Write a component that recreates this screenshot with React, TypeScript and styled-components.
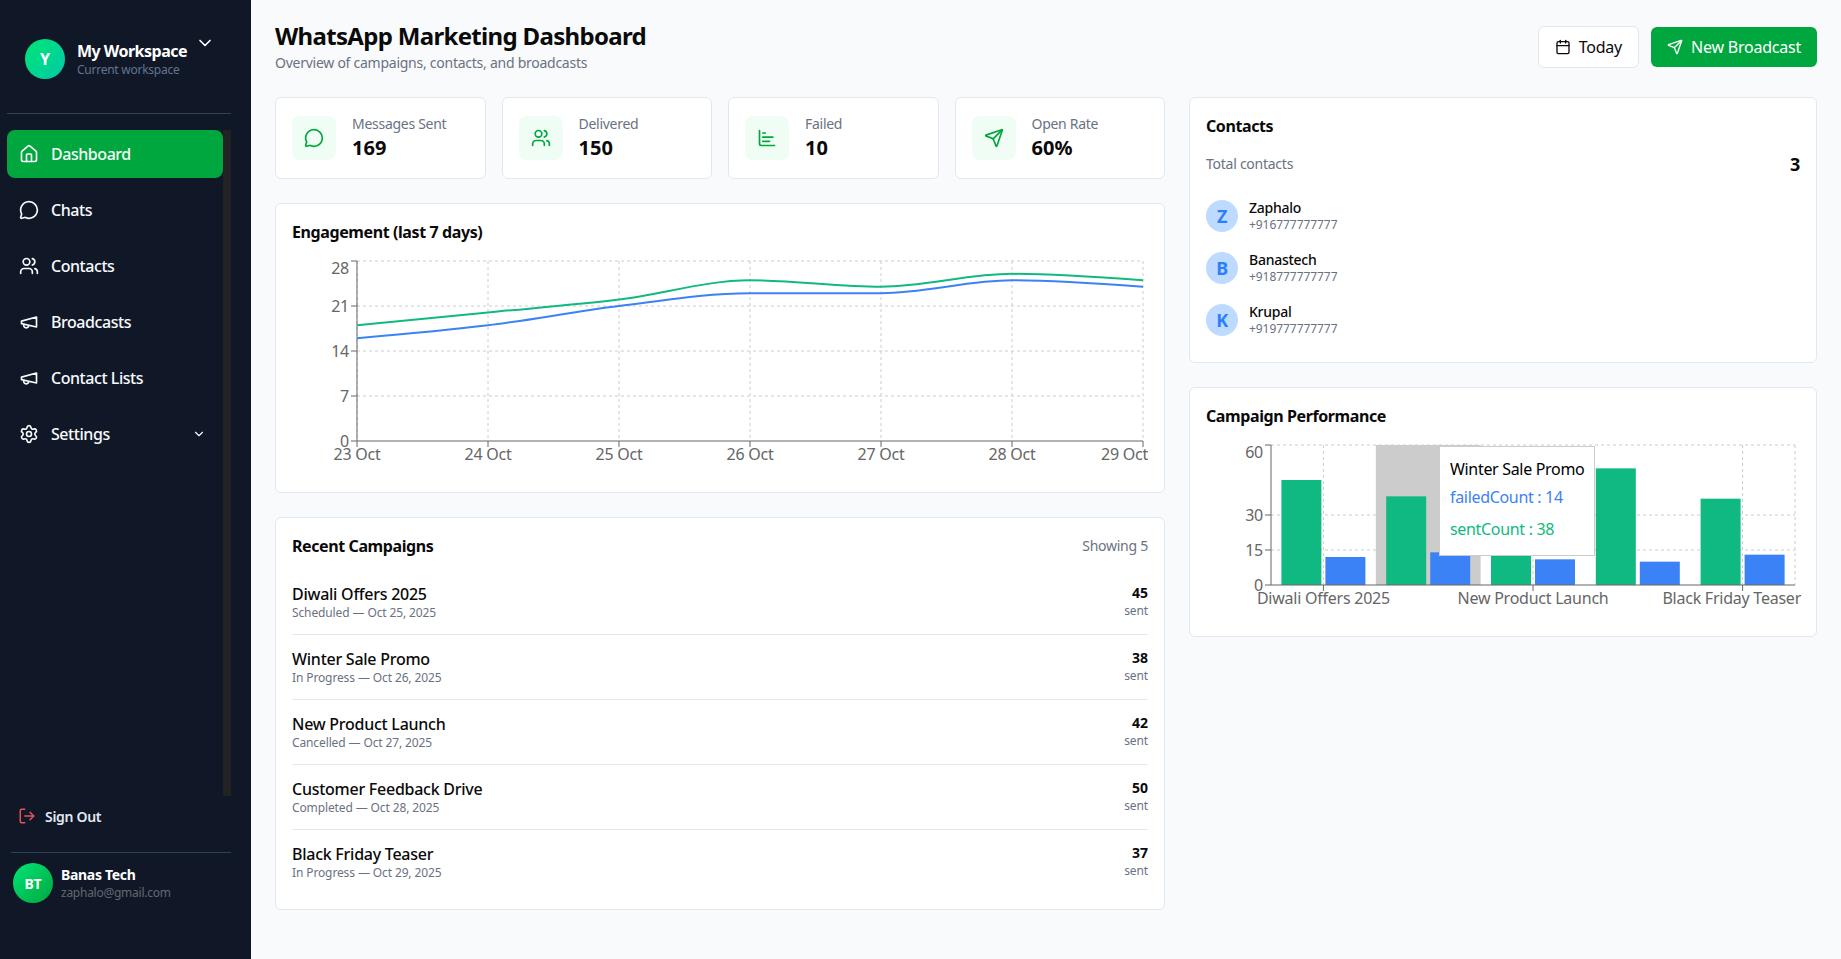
import React from 'react';
import styled, { createGlobalStyle } from 'styled-components';
import {
  House,
  MessageCircle,
  Users,
  Settings,
  ChevronDown,
  LogOut,
  Calendar,
  Send,
  ChartBar,
} from 'lucide-react';

const FONT = '"Noto Sans", "Open Sans", sans-serif';

const GlobalStyle = createGlobalStyle`
  * { box-sizing: border-box; }
  html, body { margin: 0; padding: 0; height: 100%; }
  body { font-family: ${FONT}; letter-spacing: -0.016em; background: #f9fafb; color: #0a0a0a; }
`;

// ---- layout ----

const Shell = styled.div`
  display: flex;
  height: 100vh;
  overflow: hidden;
`;

const Sidebar = styled.aside`
  width: 251px;
  flex-shrink: 0;
  background: #101828;
  color: #fff;
  display: flex;
  flex-direction: column;
  padding: 0 20px 56px 7px;
`;

const Workspace = styled.div`
  display: flex;
  align-items: center;
  box-sizing: content-box;
  height: 40px;
  padding: 39px 0 34px 18px;
  border-bottom: 1px solid #314158;
`;

const WorkspaceAvatar = styled.div`
  width: 40px;
  height: 40px;
  border-radius: 50%;
  background: linear-gradient(135deg, #00e676, #00c9a7);
  display: flex;
  align-items: center;
  justify-content: center;
  font-weight: 700;
  font-size: 16px;
  margin-right: 12px;
`;

const WorkspaceText = styled.div`
  display: flex;
  flex-direction: column;
`;

const WorkspaceName = styled.div`
  font-size: 16px;
  line-height: 20px;
  font-weight: 700;
  letter-spacing: -0.032em;
  white-space: nowrap;
`;

const WorkspaceSub = styled.div`
  font-size: 12px;
  line-height: 16px;
  margin-top: 1px;
  color: #62748e;
`;

const WorkspaceChevron = styled(ChevronDown)`
  align-self: flex-start;
  margin: -6px 0 0 8px;
`;

const Nav = styled.nav`
  flex: 1;
  margin-top: 16px;
  display: flex;
  flex-direction: column;
  gap: 8px;
  overflow: hidden;
  border-right: 8px solid #222;
`;

const NavItem = styled.a<{ $active?: boolean }>`
  display: flex;
  align-items: center;
  flex-shrink: 0;
  gap: 12px;
  height: 48px;
  padding: 0 17px 0 12px;
  border-radius: 8px;
  font-size: 16px;
  font-weight: 500;
  letter-spacing: -0.028em;
  color: #f8fafc;
  background: ${(p) => (p.$active ? '#00a63e' : 'transparent')};
`;

const NavLabel = styled.span`
  flex: 1;
`;

const SignOut = styled.a`
  display: flex;
  align-items: center;
  gap: 9px;
  height: 40px;
  padding-left: 11px;
  font-size: 14px;
  font-weight: 600;
  letter-spacing: -0.022em;
  color: #e2e8f0;
  margin-bottom: 16px;

  svg { color: #e7515a; }
`;

const UserRow = styled.div`
  display: flex;
  align-items: center;
  gap: 8px;
  margin-left: 4px;
  padding: 10px 0 0 2px;
  border-top: 1px solid #314158;
`;

const UserAvatar = styled.div`
  width: 40px;
  height: 40px;
  border-radius: 50%;
  background: linear-gradient(135deg, #00e676, #00a63e);
  display: flex;
  align-items: center;
  justify-content: center;
  font-size: 14px;
  font-weight: 700;
`;

const UserName = styled.div`
  font-size: 14px;
  line-height: 20px;
  font-weight: 700;
  letter-spacing: -0.022em;
`;

const UserMail = styled.div`
  font-size: 12px;
  line-height: 16px;
  color: #62686f;
`;

const Main = styled.main`
  flex: 1;
  min-width: 0;
  padding: 20px 24px;
  overflow: auto;
`;

const Header = styled.header`
  display: flex;
  align-items: center;
  justify-content: space-between;
  margin-bottom: 24px;
`;

const Title = styled.h1`
  margin: 0;
  font-size: 24px;
  line-height: 32px;
  font-weight: 700;
  letter-spacing: -0.028em;
`;

const Subtitle = styled.p`
  margin: 1px 0 0;
  font-size: 14px;
  line-height: 20px;
  color: #6a7282;
`;

const Actions = styled.div`
  display: flex;
  align-items: center;
  gap: 12px;
`;

const Button = styled.button<{ $primary?: boolean }>`
  display: flex;
  align-items: center;
  gap: 8px;
  height: ${(p) => (p.$primary ? '40px' : '42px')};
  padding: 0 16px;
  border-radius: 6px;
  font-family: inherit;
  font-size: 16px;
  letter-spacing: -0.014em;
  color: ${(p) => (p.$primary ? '#fff' : '#0a0a0a')};
  background: ${(p) => (p.$primary ? '#00a63e' : '#fff')};
  border: ${(p) => (p.$primary ? 'none' : '1px solid #e5e7eb')};
`;

const Columns = styled.div`
  display: grid;
  grid-template-columns: 890px 628px;
  gap: 24px;
  align-items: start;
`;

const Column = styled.div`
  display: flex;
  flex-direction: column;
  gap: 24px;
`;

const Stats = styled.div`
  display: grid;
  grid-template-columns: repeat(4, 1fr);
  gap: 16px;
`;

const Card = styled.section`
  background: #fff;
  border: 1px solid #e2e8f0;
  border-radius: 6px;
  padding: 16px;
`;

const StatCard = styled(Card)`
  display: flex;
  align-items: center;
  gap: 16px;
  height: 82px;
`;

const StatIcon = styled.div`
  width: 44px;
  height: 44px;
  border-radius: 8px;
  background: #f0fdf4;
  color: #00a63e;
  display: flex;
  align-items: center;
  justify-content: center;
`;

const StatLabel = styled.div`
  font-size: 14px;
  line-height: 20px;
  letter-spacing: -0.02em;
  color: #6a7282;
`;

const StatValue = styled.div`
  font-size: 20px;
  line-height: 28px;
  font-weight: 700;
  letter-spacing: 0;
`;

const CardTitle = styled.h2`
  margin: 0;
  font-size: 16px;
  line-height: 24px;
  font-weight: 700;
  letter-spacing: -0.025em;
`;

const ChartWrap = styled.div`
  position: relative;
  margin-top: 12px;
`;

const CardHead = styled.div`
  display: flex;
  align-items: center;
  justify-content: space-between;
  margin-bottom: 12px;
`;

const Muted = styled.span`
  font-size: 14px;
  line-height: 20px;
  color: #6a7282;
`;

const CampaignRow = styled.div`
  display: flex;
  justify-content: space-between;
  padding: 13px 0;
  border-bottom: 1px solid #e5e7eb;

  &:last-child { border-bottom: none; padding-bottom: 12px; }
`;

const CampaignName = styled.div`
  font-size: 16px;
  line-height: 22px;
  font-weight: 500;
`;

const CampaignMeta = styled.div`
  font-size: 12px;
  line-height: 16px;
  letter-spacing: -0.01em;
  color: #6a7282;
`;

const CampaignCount = styled.div`
  text-align: right;
`;

const CountValue = styled.div`
  font-size: 14px;
  line-height: 20px;
  font-weight: 700;
  letter-spacing: 0;
`;

const TotalRow = styled.div`
  display: flex;
  align-items: center;
  justify-content: space-between;
  margin-top: 12px;
`;

const TotalValue = styled.span`
  font-size: 18px;
  line-height: 28px;
  font-weight: 700;
`;

const ContactList = styled.div`
  display: flex;
  flex-direction: column;
  gap: 8px;
  margin: 16px 0 4px;
`;

const ContactRow = styled.div`
  display: flex;
  align-items: center;
  gap: 11px;
  height: 44px;
`;

const ContactAvatar = styled.div`
  width: 32px;
  height: 32px;
  border-radius: 50%;
  background: #bedbff;
  color: #2b7fff;
  display: flex;
  align-items: center;
  justify-content: center;
  font-size: 18px;
  font-weight: 700;
`;

const ContactName = styled.div`
  font-size: 14px;
  line-height: 18px;
  font-weight: 500;
`;

const ContactPhone = styled.div`
  font-size: 12px;
  line-height: 16px;
  letter-spacing: -0.005em;
  color: #6a7282;
`;

// ---- chart parts ----

const Svg = styled.svg`
  display: block;
`;

const GridLine = styled.line`
  stroke: #ccc;
  stroke-dasharray: 3 3;
`;

const AxisLine = styled.line`
  stroke: #666;
`;

const AxisText = styled.text`
  fill: #666;
  font-size: 16px;
  font-family: ${FONT};
  letter-spacing: -0.015em;
  dominant-baseline: central;
`;

const Cursor = styled.rect`
  fill: #ccc;
`;

const TooltipBox = styled.div`
  position: absolute;
  left: 233px;
  top: 6px;
  width: 156px;
  padding: 10px;
  background: #fff;
  border: 1px solid #ccc;
  white-space: nowrap;
  letter-spacing: -0.02em;
`;

const TooltipLabel = styled.div`
  font-size: 16px;
  line-height: 24px;
  color: #000;
`;

const TooltipItem = styled.div<{ $color: string }>`
  font-size: 16px;
  line-height: 24px;
  padding: 4px 0;
  color: ${(p) => p.$color};
`;

// the older lucide megaphone, the current package draws a different one
const MegaphoneIcon = ({ size = 20 }: { size?: number }) => (
  <svg
    width={size}
    height={size}
    viewBox="0 0 24 24"
    fill="none"
    stroke="currentColor"
    strokeWidth={2}
    strokeLinecap="round"
    strokeLinejoin="round"
  >
    <path d="m3 11 18-5v12L3 14v-3z" />
    <path d="M11.6 16.8a3 3 0 1 1-5.8-1.6" />
  </svg>
);

// ---- data ----

const GREEN = '#10b981';
const BLUE = '#3b82f6';

const navItems = [
  { label: 'Dashboard', icon: House, active: true },
  { label: 'Chats', icon: MessageCircle },
  { label: 'Contacts', icon: Users },
  { label: 'Broadcasts', icon: MegaphoneIcon },
  { label: 'Contact Lists', icon: MegaphoneIcon },
  { label: 'Settings', icon: Settings, chevron: true },
];

const stats = [
  { label: 'Messages Sent', value: '169', icon: MessageCircle },
  { label: 'Delivered', value: '150', icon: Users },
  { label: 'Failed', value: '10', icon: ChartBar },
  { label: 'Open Rate', value: '60%', icon: Send },
];

const campaigns = [
  { name: 'Diwali Offers 2025', status: 'Scheduled', date: 'Oct 25, 2025', sent: 45, failed: 12 },
  { name: 'Winter Sale Promo', status: 'In Progress', date: 'Oct 26, 2025', sent: 38, failed: 14 },
  { name: 'New Product Launch', status: 'Cancelled', date: 'Oct 27, 2025', sent: 42, failed: 11 },
  { name: 'Customer Feedback Drive', status: 'Completed', date: 'Oct 28, 2025', sent: 50, failed: 10 },
  { name: 'Black Friday Teaser', status: 'In Progress', date: 'Oct 29, 2025', sent: 37, failed: 13 },
];

const contacts = [
  { name: 'Zaphalo', phone: '+916777777777' },
  { name: 'Banastech', phone: '+918777777777' },
  { name: 'Krupal', phone: '+919777777777' },
];

const days = ['23 Oct', '24 Oct', '25 Oct', '26 Oct', '27 Oct', '28 Oct', '29 Oct'];
const sentLine = [18, 20, 22, 25, 24, 26, 25];
const failedLine = [16, 18, 21, 23, 23, 25, 24];

// same curve recharts draws for type="monotone"
const monotonePath = (pts: [number, number][]) => {
  const n = pts.length;
  const slope = pts.map(() => 0);
  for (let i = 1; i < n - 1; i++) {
    const h0 = pts[i][0] - pts[i - 1][0];
    const h1 = pts[i + 1][0] - pts[i][0];
    const s0 = (pts[i][1] - pts[i - 1][1]) / h0;
    const s1 = (pts[i + 1][1] - pts[i][1]) / h1;
    const p = (s0 * h1 + s1 * h0) / (h0 + h1);
    slope[i] = (Math.sign(s0) + Math.sign(s1)) * Math.min(Math.abs(s0), Math.abs(s1), 0.5 * Math.abs(p)) || 0;
  }
  const edge = (a: number, b: number, t: number) =>
    (3 * (pts[b][1] - pts[a][1])) / (pts[b][0] - pts[a][0]) / 2 - t / 2;
  slope[0] = edge(0, 1, slope[1]);
  slope[n - 1] = edge(n - 2, n - 1, slope[n - 2]);
  let d = `M${pts[0][0]},${pts[0][1]}`;
  for (let i = 1; i < n; i++) {
    const dx = (pts[i][0] - pts[i - 1][0]) / 3;
    d += `C${pts[i - 1][0] + dx},${pts[i - 1][1] + dx * slope[i - 1]},${pts[i][0] - dx},${pts[i][1] - dx * slope[i]},${pts[i][0]},${pts[i][1]}`;
  }
  return d;
};

const EngagementChart = () => {
  const left = 65;
  const right = 851;
  const top = 5;
  const bottom = 185;
  const stepX = (right - left) / 6;
  const toY = (v: number) => bottom - (v / 28) * (bottom - top);
  const line = (values: number[]) =>
    monotonePath(values.map((v, i) => [left + i * stepX, toY(v)] as [number, number]));

  return (
    <Svg width={856} height={220}>
      {[28, 21, 14, 7].map((v) => (
        <GridLine key={v} x1={left} x2={right} y1={toY(v)} y2={toY(v)} />
      ))}
      {days.map((_, i) => (
        <GridLine key={i} x1={left + i * stepX} x2={left + i * stepX} y1={top} y2={bottom} />
      ))}
      <AxisLine x1={left} x2={left} y1={top} y2={bottom} />
      <AxisLine x1={left} x2={right} y1={bottom} y2={bottom} />
      {[28, 21, 14, 7, 0].map((v) => (
        <g key={v}>
          <AxisLine x1={left - 6} x2={left} y1={toY(v)} y2={toY(v)} />
          <AxisText x={left - 8} y={v === 28 ? toY(v) + 7 : toY(v)} textAnchor="end">
            {v}
          </AxisText>
        </g>
      ))}
      {days.map((d, i) => (
        <g key={d}>
          <AxisLine x1={left + i * stepX} x2={left + i * stepX} y1={bottom} y2={bottom + 6} />
          <AxisText x={i === 6 ? 856 : left + i * stepX} y={bottom + 13} textAnchor={i === 6 ? 'end' : 'middle'}>
            {d}
          </AxisText>
        </g>
      ))}
      <path d={line(sentLine)} fill="none" stroke={GREEN} strokeWidth={2} />
      <path d={line(failedLine)} fill="none" stroke={BLUE} strokeWidth={2} />
    </Svg>
  );
};

const PerformanceChart = () => {
  const left = 65;
  const right = 589;
  const top = 5;
  const bottom = 145;
  const band = (right - left) / 5;
  const toY = (v: number) => bottom - (v / 60) * (bottom - top);
  const labelled = [0, 2, 4];

  return (
    <Svg width={596} height={180}>
      {[60, 30, 15].map((v) => (
        <GridLine key={v} x1={left} x2={right} y1={toY(v)} y2={toY(v)} />
      ))}
      <GridLine x1={right} x2={right} y1={top} y2={bottom} />
      {labelled.map((i) => (
        <GridLine key={i} x1={left + band * (i + 0.5)} x2={left + band * (i + 0.5)} y1={top} y2={bottom} />
      ))}
      <Cursor x={left + band} y={top} width={band} height={bottom - top} />
      {campaigns.map((c, i) => {
        const x = left + band * i + (band - 84) / 2;
        return (
          <g key={c.name}>
            <rect x={x} y={toY(c.sent)} width={40} height={bottom - toY(c.sent)} fill={GREEN} />
            <rect x={x + 44} y={toY(c.failed)} width={40} height={bottom - toY(c.failed)} fill={BLUE} />
          </g>
        );
      })}
      <AxisLine x1={left} x2={left} y1={top} y2={bottom} />
      <AxisLine x1={left} x2={right} y1={bottom} y2={bottom} />
      {[60, 30, 15, 0].map((v) => (
        <g key={v}>
          <AxisLine x1={left - 6} x2={left} y1={toY(v)} y2={toY(v)} />
          <AxisText x={left - 8} y={v === 60 ? toY(v) + 7 : toY(v)} textAnchor="end">
            {v}
          </AxisText>
        </g>
      ))}
      {labelled.map((i) => (
        <g key={i}>
          <AxisLine x1={left + band * (i + 0.5)} x2={left + band * (i + 0.5)} y1={bottom} y2={bottom + 6} />
          <AxisText
            x={i === 4 ? 595 : left + band * (i + 0.5)}
            y={bottom + 13}
            textAnchor={i === 4 ? 'end' : 'middle'}
          >
            {campaigns[i].name}
          </AxisText>
        </g>
      ))}
    </Svg>
  );
};

export default function App() {
  return (
    <>
      <GlobalStyle />
      <Shell>
        <Sidebar>
          <Workspace>
            <WorkspaceAvatar>Y</WorkspaceAvatar>
            <WorkspaceText>
              <WorkspaceName>My Workspace</WorkspaceName>
              <WorkspaceSub>Current workspace</WorkspaceSub>
            </WorkspaceText>
            <WorkspaceChevron size={20} />
          </Workspace>
          <Nav>
            {navItems.map((item) => (
              <NavItem key={item.label} $active={item.active}>
                <item.icon size={20} />
                <NavLabel>{item.label}</NavLabel>
                {item.chevron && <ChevronDown size={14} />}
              </NavItem>
            ))}
          </Nav>
          <SignOut>
            <LogOut size={18} />
            Sign Out
          </SignOut>
          <UserRow>
            <UserAvatar>BT</UserAvatar>
            <div>
              <UserName>Banas Tech</UserName>
              <UserMail>zaphalo@gmail.com</UserMail>
            </div>
          </UserRow>
        </Sidebar>
        <Main>
          <Header>
            <div>
              <Title>WhatsApp Marketing Dashboard</Title>
              <Subtitle>Overview of campaigns, contacts, and broadcasts</Subtitle>
            </div>
            <Actions>
              <Button>
                <Calendar size={16} />
                Today
              </Button>
              <Button $primary>
                <Send size={16} />
                New Broadcast
              </Button>
            </Actions>
          </Header>
          <Columns>
            <Column>
              <Stats>
                {stats.map((s) => (
                  <StatCard key={s.label}>
                    <StatIcon>
                      <s.icon size={20} />
                    </StatIcon>
                    <div>
                      <StatLabel>{s.label}</StatLabel>
                      <StatValue>{s.value}</StatValue>
                    </div>
                  </StatCard>
                ))}
              </Stats>
              <Card>
                <CardTitle>Engagement (last 7 days)</CardTitle>
                <ChartWrap>
                  <EngagementChart />
                </ChartWrap>
              </Card>
              <Card>
                <CardHead>
                  <CardTitle>Recent Campaigns</CardTitle>
                  <Muted>Showing 5</Muted>
                </CardHead>
                {campaigns.map((c) => (
                  <CampaignRow key={c.name}>
                    <div>
                      <CampaignName>{c.name}</CampaignName>
                      <CampaignMeta>
                        {c.status} — {c.date}
                      </CampaignMeta>
                    </div>
                    <CampaignCount>
                      <CountValue>{c.sent}</CountValue>
                      <CampaignMeta>sent</CampaignMeta>
                    </CampaignCount>
                  </CampaignRow>
                ))}
              </Card>
            </Column>
            <Column>
              <Card>
                <CardTitle>Contacts</CardTitle>
                <TotalRow>
                  <Muted>Total contacts</Muted>
                  <TotalValue>3</TotalValue>
                </TotalRow>
                <ContactList>
                  {contacts.map((c) => (
                    <ContactRow key={c.name}>
                      <ContactAvatar>{c.name[0]}</ContactAvatar>
                      <div>
                        <ContactName>{c.name}</ContactName>
                        <ContactPhone>{c.phone}</ContactPhone>
                      </div>
                    </ContactRow>
                  ))}
                </ContactList>
              </Card>
              <Card>
                <CardTitle>Campaign Performance</CardTitle>
                <ChartWrap>
                  <PerformanceChart />
                  <TooltipBox>
                    <TooltipLabel>Winter Sale Promo</TooltipLabel>
                    <TooltipItem $color={BLUE}>failedCount : 14</TooltipItem>
                    <TooltipItem $color={GREEN}>sentCount : 38</TooltipItem>
                  </TooltipBox>
                </ChartWrap>
              </Card>
            </Column>
          </Columns>
        </Main>
      </Shell>
    </>
  );
}
